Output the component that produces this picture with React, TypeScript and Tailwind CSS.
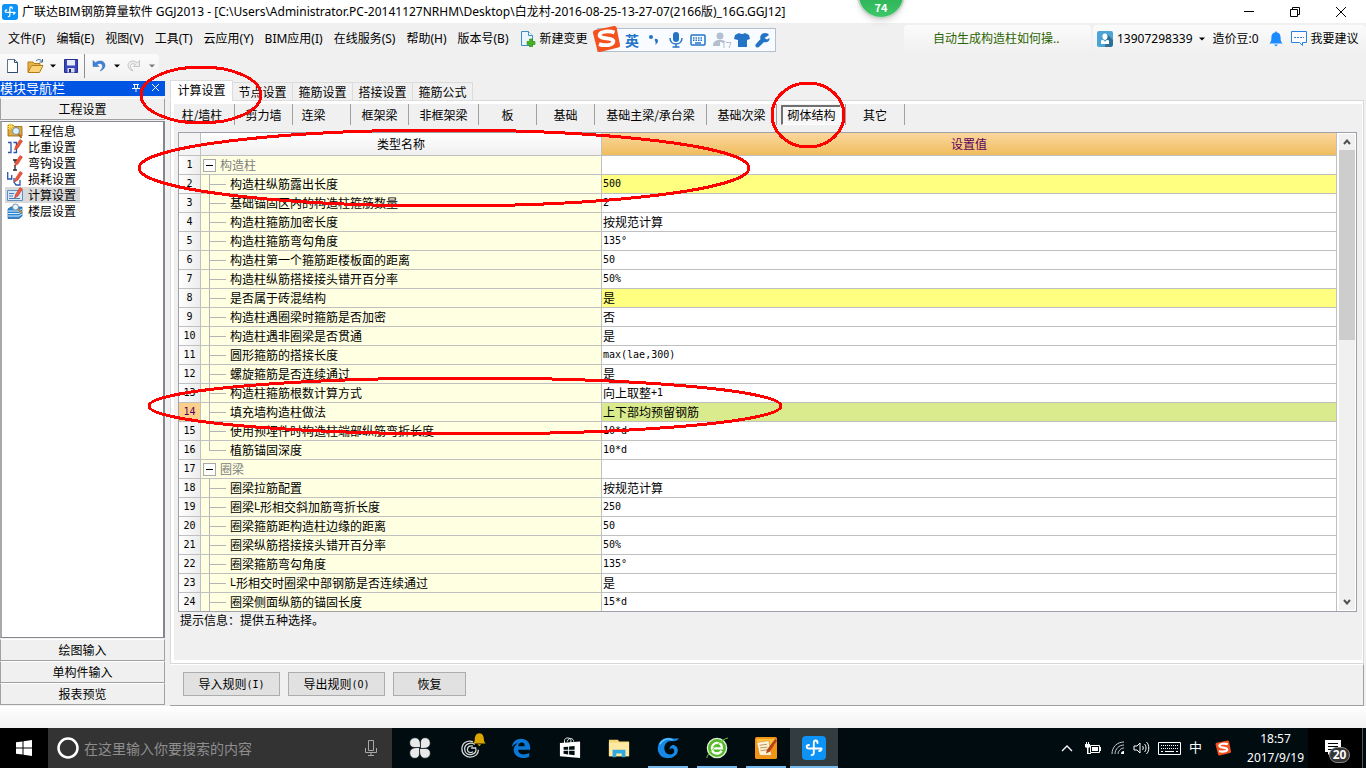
import { useState, type ReactNode } from "react";
import clsx from "clsx";

type Row = {
  label: string;
  value?: string;
  group?: boolean;
  last?: boolean;
  highlight?: boolean;
};

const menus = ["文件(F)", "编辑(E)", "视图(V)", "工具(T)", "云应用(Y)", "BIM应用(I)", "在线服务(S)", "帮助(H)", "版本号(B)"];

const mainTabs = ["计算设置", "节点设置", "箍筋设置", "搭接设置", "箍筋公式"];

const subTabs = [
  { name: "柱/墙柱", width: "w-[61px] pr-1" },
  { name: "剪力墙", width: "w-[58px]" },
  { name: "连梁", width: "w-[58px] pr-4" },
  { name: "框架梁", width: "w-[58px]" },
  { name: "非框架梁", width: "w-[70px]" },
  { name: "板", width: "w-[58px]" },
  { name: "基础", width: "w-[58px]" },
  { name: "基础主梁/承台梁", width: "w-[112px]" },
  { name: "基础次梁", width: "w-[70px]" },
  { name: "砌体结构", width: "w-[69px]" },
  { name: "其它", width: "w-[59px]" },
];

const rows: Row[] = [
  { label: "构造柱", group: true },
  { label: "构造柱纵筋露出长度", value: "500", highlight: true },
  { label: "基础锚固区内的构造柱箍筋数量", value: "2" },
  { label: "构造柱箍筋加密长度", value: "按规范计算" },
  { label: "构造柱箍筋弯勾角度", value: "135°" },
  { label: "构造柱第一个箍筋距楼板面的距离", value: "50" },
  { label: "构造柱纵筋搭接接头错开百分率", value: "50%" },
  { label: "是否属于砖混结构", value: "是", highlight: true },
  { label: "构造柱遇圈梁时箍筋是否加密", value: "否" },
  { label: "构造柱遇非圈梁是否贯通", value: "是" },
  { label: "圆形箍筋的搭接长度", value: "max(lae,300)" },
  { label: "螺旋箍筋是否连续通过", value: "是" },
  { label: "构造柱箍筋根数计算方式", value: "向上取整+1" },
  { label: "填充墙构造柱做法", value: "上下部均预留钢筋" },
  { label: "使用预埋件时构造柱端部纵筋弯折长度", value: "10*d" },
  { label: "植筋锚固深度", value: "10*d", last: true },
  { label: "圈梁", group: true },
  { label: "圈梁拉筋配置", value: "按规范计算" },
  { label: "圈梁L形相交斜加筋弯折长度", value: "250" },
  { label: "圈梁箍筋距构造柱边缘的距离", value: "50" },
  { label: "圈梁纵筋搭接接头错开百分率", value: "50%" },
  { label: "圈梁箍筋弯勾角度", value: "135°" },
  { label: "L形相交时圈梁中部钢筋是否连续通过", value: "是" },
  { label: "圈梁侧面纵筋的锚固长度", value: "15*d" },
];

const mono = "font-['DejaVu_Sans_Mono',monospace] text-[10px]";
const ui = "font-['Noto_Sans','Noto_Sans_CJK_SC',sans-serif]";

// CJK keeps 12px, runs of latin text and digits use the narrow 6px mono
function Mixed({ text }: { text: string }) {
  return (
    <span className="flex items-center justify-center">
      {text.split(/([\x20-\xff]+)/).filter(Boolean).map((part, i) => (
        <span key={i} className={clsx(/^[\x20-\xff]/.test(part) && mono)}>
          {part}
        </span>
      ))}
    </span>
  );
}

function BimLogo({ className }: { className?: string }) {
  return (
    <svg viewBox="0 0 24 24" className={className} aria-hidden="true">
      <rect width="24" height="24" rx="4" fill="#0d93f6" />
      <path
        d="M15.500 7c0-1.700-.8-2.500-1.900-2.500-1.300 0-1.800.9-1.800 2.200v9.800c0 1.700-.8 2.600-2.200 2.600M19.500 12.500H7c-1.500 0-2.300-.5-2.300-1.700S5.500 9 7 9M19.500 12.500c0 1.700-.8 2.500-2.300 2.500"
        fill="none"
        stroke="#fff"
        strokeWidth="1.900"
        strokeLinecap="round"
      />
    </svg>
  );
}

function SogouS({ className }: { className?: string }) {
  return (
    <svg viewBox="0 0 28 28" className={className} aria-hidden="true">
      <path d="M3 5 22 1q2-.4 2.600 1.600L28 20q.3 2-1.700 2.600L8 27q-2 .4-2.600-1.600L1 8q-.3-2.300 2-3z" fill="#f4511e" />
      <path d="M22.500 7.500C17 5.500 8 6 7.600 10.200c-.3 4.300 14 1.800 13.800 6.300-.2 4-9.400 4.500-14.400 2.600" fill="none" stroke="#fff" strokeWidth="3.800" />
    </svg>
  );
}

function Caret({ className = "text-black" }: { className?: string }) {
  return (
    <svg viewBox="0 0 6 4" className={clsx("h-1 w-[6px]", className)} aria-hidden="true">
      <path d="M0 .5h6L3 3.500z" fill="currentColor" />
    </svg>
  );
}

function TitleBar() {
  return (
    <header className={clsx("flex h-[23px] shrink-0 items-center bg-white pl-[2px] text-[12px]", ui)}>
      <BimLogo className="h-4 w-4" />
      <h1 className="ml-1 whitespace-nowrap">
        广联达BIM钢筋算量软件 GGJ2013 - [C:\Users\Administrator.PC-20141127NRHM\Desktop\白龙村-2016-08-25-13-27-07(2166版)_16G.GGJ12]
      </h1>
      <div className="ml-auto flex pr-[2px]">
        <button aria-label="最小化" className="flex h-[22px] w-[46px] items-center justify-center">
          <svg viewBox="0 0 12 12" className="h-3 w-3"><path d="M1 5.500h10" stroke="#000" /></svg>
        </button>
        <button aria-label="还原" className="flex h-[22px] w-[46px] items-center justify-center">
          <svg viewBox="0 0 12 12" className="h-3 w-3"><path d="M1.500 3.500h7v7h-7zM3.500 3.500v-2h7v7h-2" fill="none" stroke="#000" /></svg>
        </button>
        <button aria-label="关闭" className="flex h-[22px] w-[46px] items-center justify-center">
          <svg viewBox="0 0 12 12" className="h-3 w-3"><path d="m1 1 10 10M11 1 1 11" stroke="#000" /></svg>
        </button>
      </div>
    </header>
  );
}

function MenuBar() {
  return (
    <div className={clsx("flex h-[31px] shrink-0 items-center pl-2 text-[12px] whitespace-nowrap", ui)}>
      <nav className="flex gap-[11px]">
        {menus.map((m) => (
          <button key={m}>{m}</button>
        ))}
        <button className="flex items-center gap-1">
          <svg viewBox="0 0 16 16" className="h-4 w-4" aria-hidden="true">
            <path d="M1.500.5h7l4 4v10h-11z" fill="#eaf6ff" stroke="#3a8fc4" />
            <path d="M8.500.5v4h4" fill="#fff" stroke="#3a8fc4" />
            <path d="M9.500 8h3v2.500H15v3h-2.500V16h-3v-2.500H7v-3h2.500z" fill="#45b51d" stroke="#2b8a12" strokeWidth=".6" />
          </svg>
          新建变更
        </button>
      </nav>
      <div className="ml-auto flex gap-[2px]">
        <a href="#" className="flex h-7 w-[187px] items-center rounded-sm bg-linear-to-b from-[#fbfbfb] to-[#f0f0f0] pl-[29px] text-[#2b6500]">
          自动生成构造柱如何操..
        </a>
        <div className="flex h-7 w-[273px] items-center rounded-sm bg-linear-to-b from-[#fbfbfb] to-[#f0f0f0] pl-1">
          <button className="flex items-center">
            <svg viewBox="0 0 16 16" className="mr-1 h-4 w-4" aria-hidden="true">
              <rect width="16" height="16" rx="2" fill="#4ba3d6" />
              <path d="m10 3 6 6v5l-2 2H8z" fill="#2f6f98" />
              <path d="M8 2.500c1.800 0 2.600 1.200 2.600 2.800C10.600 7 9.600 9 8 9S5.400 7 5.400 5.300C5.400 3.700 6.200 2.500 8 2.500zM4 9.500l2-.7 2 2 2-2 2 .7V13H4z" fill="#fff" />
            </svg>
            13907298339
            <span className="ml-[6px]"><Caret /></span>
          </button>
          <span className="ml-2">造价豆:0</span>
          <button aria-label="通知" className="ml-[10px]">
            <svg viewBox="0 0 14 16" className="h-4 w-[14px]"><path d="M7 0 8 1.500c3 .6 3.600 3 3.600 5.500 0 2.500.6 4 1.900 5.500H.5C1.800 11 2.400 9.500 2.400 7c0-2.500.6-4.900 3.600-5.500zM5 13.500h4L7 15.500z" fill="#1c8bff" /></svg>
          </button>
          <button className="ml-2 flex items-center gap-1">
            <svg viewBox="0 0 16 16" className="h-4 w-4" aria-hidden="true">
              <path d="M.5.5h15v11h-4v3l-3-3h-8z" fill="#fff" stroke="#2483e2" />
              <path d="M3 6.500h10" stroke="#2483e2" strokeDasharray="2 1" />
            </svg>
            我要建议
          </button>
        </div>
      </div>
    </div>
  );
}

function ToolBar() {
  return (
    <div className="flex h-[27px] shrink-0 pb-[3px]">
      <div className="flex items-center rounded-r-sm bg-linear-to-b from-[#fbfbfb] to-[#f2f2f2] pl-[5px]">
        <button aria-label="新建" className="w-[22px]">
          <svg viewBox="0 0 16 16" className="h-4 w-4">
            <path d="M2.500 1.500h7l3 3v10h-10z" fill="#fff" stroke="#5b7395" />
            <path d="M9.500 1.500v3h3v10h-10" fill="none" stroke="#2f4a73" />
          </svg>
        </button>
        <button aria-label="打开" className="flex w-9 items-center gap-[6px]">
          <svg viewBox="0 0 17 16" className="h-4 w-[17px]">
            <path d="M1 14V4h5l1 1.500h6V8" fill="#e9b44c" stroke="#b57c12" />
            <path d="M1 14.500 4.500 7.500H16L12.500 14.500z" fill="#fbd277" stroke="#b57c12" />
            <path d="M9 3c2-2 4.500-2 6 .5M15.500 1v3h-3" fill="none" stroke="#35608f" />
          </svg>
          <Caret />
        </button>
        <button aria-label="保存" className="flex h-full w-[22px] items-center border-r border-[#8d8d8d]">
          <svg viewBox="0 0 16 16" className="h-4 w-4">
            <path d="M1.500 1.500h13v13h-13z" fill="#3a46bd" stroke="#27308e" />
            <path d="M4 2h8v5.500H4z" fill="#e6ecfa" />
            <path d="M4.500 10h7v4.500h-7z" fill="#d5dbf2" />
            <path d="M6 11h2v3.500H6z" fill="#1d2468" />
          </svg>
        </button>
        <button aria-label="撤销" className="ml-[7px] flex w-[35px] items-center gap-2">
          <svg viewBox="0 0 14 14" className="h-[14px] w-[14px]">
            <path d="M1 1.500v6h6L5 5.500c2.500-2 5.500-1 5.500 1.700 0 2-1 3.300-2.500 4.800 3-1 5-3 5-5.700C13 2 7.500.5 3.300 3.800z" fill="#3f83d9" stroke="#2a66b5" strokeWidth=".5" />
          </svg>
          <Caret />
        </button>
        <button aria-label="重做" className="flex w-8 items-center gap-2">
          <svg viewBox="0 0 14 14" className="h-[14px] w-[14px]">
            <path d="M12.500 1.500v6h-6l2-2C6 4 3.500 5 3.500 7.200c0 2 1 3.300 2.500 4.800-3-1-5-3-5-5.700C1 2 6.500.5 10.300 3.800z" fill="#eee" stroke="#b9b9b9" strokeWidth=".8" />
          </svg>
          <Caret className="text-[#777]" />
        </button>
      </div>
    </div>
  );
}

const pencil = <path d="m8.500 7.500 4.500-7L15.500 2 11 9l-3.500 2z" fill="#f0563a" stroke="#b33019" strokeWidth=".5" />;

const navItems: { name: string; icon: ReactNode }[] = [
  {
    name: "工程信息",
    icon: (
      <>
        <path d="M1 2h5l1 1.500h8V13H1z" fill="#e0a93c" stroke="#8f6410" strokeWidth=".8" />
        <path d="M3 0v7M0 3.500h7M1 1l5 5M6 1 1 6" stroke="#ffe14d" />
        <circle cx="9" cy="8" r="3.500" fill="#dff0ff" stroke="#6b8eae" />
        <path d="m11.500 11 3 4" stroke="#b5661c" strokeWidth="2" />
      </>
    ),
  },
  {
    name: "比重设置",
    icon: (
      <>
        <path d="M1 3.500h3v10H1M6.500 3.500h3v10h-3" fill="none" stroke="#2b56ac" strokeWidth="1.300" />
        {pencil}
      </>
    ),
  },
  {
    name: "弯钩设置",
    icon: (
      <>
        <path d="M6 5h4M8 5v3M8 10v5M6 15h4" stroke="#222" strokeWidth="1.300" />
        {pencil}
      </>
    ),
  },
  {
    name: "损耗设置",
    icon: (
      <>
        <path d="M.7 1v7h4V4M7 7v4l2 3h4V9" fill="none" stroke="#2b56ac" strokeWidth="1.300" />
        {pencil}
      </>
    ),
  },
  {
    name: "计算设置",
    icon: (
      <>
        <path d="M.5 3.500h15v10H.5z" fill="#d6e9fb" stroke="#5d8fc4" />
        <path d="M2 6.500h5M2 9h4M2 11.500h11" stroke="#4a7db8" />
        {pencil}
      </>
    ),
  },
  {
    name: "楼层设置",
    icon: (
      <>
        <path d="m1 6 3-2h11v9l-3 2.500H1z" fill="#2e86d0" stroke="#185a9a" strokeWidth=".7" />
        <path d="M1 8h11l3-2M1 10.500h11l3-2M1 13h11l3-2" fill="none" stroke="#d5ecff" />
        <circle cx="8.500" cy="4" r="3" fill="#e8f4ff" stroke="#7794ab" />
        <path d="m11 6 4 4" stroke="#c07a2b" strokeWidth="1.600" />
      </>
    ),
  },
];

function Sidebar() {
  const [active, setActive] = useState("计算设置");
  const bar = "flex h-[22px] shrink-0 items-center justify-center border-r border-b border-l border-[#a0a0a0] bg-[#f0f0f0]";
  return (
    <aside className="mb-px flex w-[165px] shrink-0 flex-col">
      <div className="flex h-[15px] shrink-0 items-center bg-[#0055e3] pb-px text-[13px] leading-[14px] text-white">
        模块导航栏
        <button aria-label="固定" className="mr-[10px] ml-auto">
          <svg viewBox="0 0 10 10" className="h-[10px] w-[10px]"><path d="M2 1.500h6M3.500 1.500v4M6.500 1.500v4M1 5.500h8M5 5.500V9" fill="none" stroke="#fff" /></svg>
        </button>
        <button aria-label="关闭导航栏" className="mr-1">
          <svg viewBox="0 0 10 10" className="h-[10px] w-[10px]"><path d="m1 1 7 7M8 1 1 8" stroke="#fff" /></svg>
        </button>
      </div>
      <button className={clsx(bar, "mt-[2px] border-t border-t-white")}>工程设置</button>
      <ul className="mt-px flex-1 border-2 border-t border-b border-[#828790] border-l-[#a8a8a8] bg-white py-px pl-[3px]">
        {navItems.map((item) => (
          <li key={item.name}>
            <button
              onClick={() => setActive(item.name)}
              className={clsx("flex h-4 items-center pr-1 leading-4", active === item.name && "bg-[#d9d9d9]")}
            >
              <svg viewBox="0 0 16 16" className="mx-[2px] h-4 w-4" aria-hidden="true">
                {item.icon}
              </svg>
              <span className="ml-[3px]">{item.name}</span>
            </button>
          </li>
        ))}
      </ul>
      <div className="mt-px">
        {["绘图输入", "单构件输入", "报表预览"].map((name) => (
          <button key={name} className={clsx(bar, "w-full border-t border-t-white")}>
            {name}
          </button>
        ))}
      </div>
    </aside>
  );
}

function SettingsTable() {
  const current = 13;
  return (
    <div className="flex min-h-0 flex-1 border border-[#a0a0a8] bg-white">
      <div className="min-w-0 flex-1 overflow-hidden">
        <table className="w-full table-fixed border-separate border-spacing-0 leading-[18px]">
          <colgroup>
            <col className="w-[22px]" />
            <col className="w-[401px]" />
            <col />
          </colgroup>
          <thead>
            <tr className="h-[23px]">
              <th className="border-r border-b border-[#c0c0c0] bg-[#f4f4f4] p-0" />
              <th className="border-r border-b border-[#c0c0c0] bg-linear-to-b from-white to-[#efefef] p-0 font-normal">类型名称</th>
              <th className="border-r border-b border-[#c0c0c0] bg-linear-to-b from-[#fbd79d] to-[#efbd5c] p-0 font-normal text-[#5c0060]">设置值</th>
            </tr>
          </thead>
          <tbody>
            {rows.map((row, i) => (
              <tr key={i} className="h-[19px]">
                <th
                  className={clsx(
                    "border-r border-b border-[#c0c0c0] p-0 font-normal",
                    mono,
                    i === current ? "bg-[#fdd08a] text-[#5c0060]" : "bg-linear-to-r from-white to-[#ececec]"
                  )}
                >
                  {i + 1}
                </th>
                <td className="border-r border-b border-[#c0c0c0] bg-[#ffffe1] p-0">
                  {row.group ? (
                    <div className="flex h-[18px] items-center gap-1 pl-[2px] text-[#808080]">
                      <button aria-label="折叠" className="flex h-[13px] w-[13px] items-center justify-center border border-[#a8a8a8] bg-white">
                        <span className="h-px w-[7px] bg-black" />
                      </button>
                      {row.label}
                    </div>
                  ) : (
                    <div className="flex h-[18px] pl-2 whitespace-nowrap">
                      <span className={clsx("w-px bg-[#b4b4b4]", row.last ? "h-[10px]" : "h-[18px]")} />
                      <span className="mr-1 h-[10px] w-4 border-b border-[#b4b4b4]" />
                      <Mixed text={row.label} />
                    </div>
                  )}
                </td>
                <td
                  className={clsx(
                    "border-r border-b border-[#c0c0c0] py-0 pr-0 pl-px",
                    row.highlight && "bg-[#ffff80]",
                    i === current && "bg-[#d9eb8d]"
                  )}
                >
                  <div className="flex h-[18px]">
                    <Mixed text={row.value ?? ""} />
                  </div>
                </td>
              </tr>
            ))}
          </tbody>
        </table>
      </div>
      <div className="my-px mr-px ml-[2px] flex w-4 flex-col bg-[#f0f0f0]">
        <button aria-label="向上滚动" className="flex h-4 items-center justify-center">
          <svg viewBox="0 0 8 6" className="h-[6px] w-2"><path d="m1 5 3-3.500L7 5" fill="none" stroke="#505050" strokeWidth="2" /></svg>
        </button>
        <div className="h-[190px] bg-[#cdcdcd]" />
        <button aria-label="向下滚动" className="mt-auto flex h-4 items-center justify-center">
          <svg viewBox="0 0 8 6" className="h-[6px] w-2"><path d="m1 1 3 3.500L7 1" fill="none" stroke="#505050" strokeWidth="2" /></svg>
        </button>
      </div>
    </div>
  );
}

function MainPanel() {
  const [tab, setTab] = useState("计算设置");
  const [sub, setSub] = useState("砌体结构");
  const pushButton = "flex h-6 items-center justify-center border border-[#adadad] bg-[#e1e1e1]";
  return (
    <main className="-mt-px mr-[2px] ml-[5px] flex min-w-0 flex-1 flex-col">
      <div className="relative -mb-px flex items-end">
        {mainTabs.map((name) => (
          <button
            key={name}
            onClick={() => setTab(name)}
            className={clsx(
              "border border-[#dcdcdc]",
              tab === name ? "h-[21px] w-[63px] border-b-white bg-white pb-[2px]" : "-ml-px h-[19px] w-[61px] first:ml-0"
            )}
          >
            {name}
          </button>
        ))}
      </div>
      <section className="flex min-h-0 flex-1 flex-col border border-[#d8d8d8] bg-white p-[3px] pr-px">
        <div className="flex min-h-0 flex-1 flex-col bg-[#f0f0f0] pr-[5px] pl-1">
          <div className="-ml-1 flex h-7 shrink-0 items-start">
            {subTabs.map((s) => (
              <div key={s.name} className={clsx("flex h-[21px] items-center justify-center border-r border-[#a0a0a0]", s.width)}>
                <button
                  onClick={() => setSub(s.name)}
                  className={clsx(
                    "h-5 whitespace-nowrap",
                    sub === s.name && "border-t-2 border-r border-b border-l-2 border-[#707070] border-r-white border-b-white bg-[#f8f8f8] px-1 leading-4"
                  )}
                >
                  {s.name}
                </button>
              </div>
            ))}
          </div>
          <SettingsTable />
          <p className="h-12 shrink-0 pl-[2px] leading-4">提示信息：提供五种选择。</p>
        </div>
      </section>
      <footer className="flex h-[42px] shrink-0 gap-2 border-t border-r border-b border-[#a0a0a0] border-t-white pt-[7px] pl-[13px]">
        <button className={clsx(pushButton, "w-[97px]")}><Mixed text="导入规则(I)" /></button>
        <button className={clsx(pushButton, "w-[97px]")}><Mixed text="导出规则(O)" /></button>
        <button className={clsx(pushButton, "w-[73px]")}>恢复</button>
      </footer>
    </main>
  );
}

const apps: { name: string; state?: string; icon: ReactNode }[] = [
  {
    name: "风扇",
    icon: (
      <g fill="#e8eaea" stroke="#000c10" strokeWidth=".8">
        <path d="M12.500 11.500H6C2.500 11.500.7 9.500.7 6.300S3 .8 6.500.8c4 0 6.500 3 6 10.700z" />
        <path d="M12.500 12.500V6C12.500 2.500 14.500.7 17.700.7s5.500 2.300 5.500 5.800c0 4-3 6.500-10.700 6z" />
        <path d="M11.500 12.500H18c3.500 0 5.300 2 5.300 5.200s-2.300 5.500-5.800 5.500c-4 0-6.500-3-6-10.700z" />
        <path d="M11.500 11.500V18c0 3.500-2 5.300-5.200 5.300S.8 21 .8 17.500c0-4 3-6.500 10.700-6z" />
      </g>
    ),
  },
  {
    name: "提醒",
    icon: (
      <>
        <path d="M13 5C6 3 1 7 1 13s5 9 9 9c6 0 9-4 9-8M15 8c-5-3-11 0-11 5s4 7 8 6 5-4 4-7h-5M13 10c-4-1-6 1-6 4s4 4 6 2" fill="none" stroke="#d6dada" strokeWidth="1.400" />
        <path d="M20-4c4 0 5 4 5 7 0 2 1 3 2 4H13c1-1 2-2 2-4 0-3 1-7 5-7zM18 8h4l-2 2z" fill="#dba500" />
      </>
    ),
  },
  {
    name: "Edge",
    icon: <path d="M2 11C3 5 7 2 12 2c6 0 10 4 10 10v2H9c0 4 3 5 6 5 2 0 4-.5 6-1.500v4c-2 1-4 1.500-7 1.500-6 0-10-4-10-9 0-3 2-6 5-7.500-3 .5-5 2-7 4.500zm7-1h7c0-3-1-4-3.300-4C10.500 6 9 8 9 10z" fill="#0a78d7" />,
  },
  {
    name: "应用商店",
    icon: (
      <>
        <path d="M1 6.500 23 5v18L1 21z" fill="#fff" />
        <path d="M6 7V4c0-4 7-4 7 0v3M9 5c1-5 7-4 7 0" fill="none" stroke="#fff" />
        <path d="m5 11 5-.5V14H5zM11 10.300l6-.5V14h-6zM5 15h5v4l-5-.6zM11 15h6v5l-6-.8z" fill="#000c10" />
      </>
    ),
  },
  {
    name: "资源管理器",
    icon: (
      <>
        <path d="M1 3h10l1 2h11v16H1z" fill="#f7d774" />
        <path d="M1 6h22v15H1z" fill="#ffe9a2" />
        <path d="M5 22v-8h14v8h-4v-4H9v4z" fill="#2fa8e0" />
      </>
    ),
  },
  {
    name: "浏览器",
    state: "bg-[#76b9ed]",
    icon: (
      <>
        <path d="M24 1c-2 3-4 3.500-7 3.500C11 4 8 8 8 12c0 5 3 7 6 7 4 0 6-3 4-6-1-1-3-1-4 1-1-3 2-6 5-5 5 2 5 9 0 12-2 1.500-4 2-6 2C5 24 0 18 1 11 2 4 8 0 14 1c4 1 7 1 10 0z" fill="#1688e8" />
        <path d="M3 8C6 2 12 1 17 3" fill="none" stroke="#65c8ff" strokeWidth="1.500" />
      </>
    ),
  },
  {
    name: "360浏览器",
    state: "bg-[#76b9ed]",
    icon: (
      <>
        <circle cx="12" cy="12" r="10.500" fill="#55b82c" stroke="#dff3d4" strokeWidth="1.500" />
        <path d="M17 15c-1 2-3 3-5 3-4 0-5.500-3-5.500-6S9 6.500 12 6.500s5.500 2 5.500 6H8" fill="none" stroke="#fff" strokeWidth="2.500" />
        <path d="M1 23C0 19 17 2 24 1" fill="none" stroke="#66d22f" />
      </>
    ),
  },
  {
    name: "记事",
    state: "bg-[#76b9ed]",
    icon: (
      <>
        <rect width="24" height="24" rx="2" fill="#f39413" />
        <path d="M2 2h20v7H2z" fill="#ffc23d" />
        <path d="m2 6 13-2 3 16H5z" fill="#fff3d6" stroke="#c98a2e" strokeWidth=".6" />
        <path d="m5 9 8-1M5.500 12l8-1M6 15l7-1" stroke="#b88a4d" />
        <path d="m22 2-9 12-1 4 4-2 8-12z" fill="#b5431b" />
      </>
    ),
  },
];

function TaskBar() {
  return (
    <footer className={clsx("flex h-10 shrink-0 bg-[#000c10] text-white", ui)}>
      <button aria-label="开始" className="flex w-12 items-center justify-center bg-black">
        <svg viewBox="0 0 16 16" className="h-4 w-4"><path d="M0 2.300 6.500 1.400v6.100H0zM7.500 1.200 16 0v7.500H7.500zM0 8.500h6.500v6.100L0 13.700zM7.500 8.500H16V16l-8.500-1.200z" fill="#fff" /></svg>
      </button>
      <label className="flex w-[344px] items-center bg-[#333] pl-2">
        <svg viewBox="0 0 24 24" className="h-6 w-6 shrink-0" aria-hidden="true"><circle cx="12" cy="12" r="9.500" fill="none" stroke="#fff" strokeWidth="2.500" /></svg>
        <input
          aria-label="搜索"
          placeholder="在这里输入你要搜索的内容"
          className="ml-1 min-w-0 flex-1 bg-transparent text-[14px] outline-none placeholder:text-[#8e8e8e]"
        />
        <svg viewBox="0 0 12 18" className="mr-[15px] h-[18px] w-3 shrink-0" aria-hidden="true">
          <path d="M3.500 1.500h5v10h-5zM.5 9v4.500h11V9M6 13.500v3M3 16.500h6" fill="none" stroke="#a8a8a8" />
        </svg>
      </label>
      <div className="flex">
        {apps.map((app, i) => (
          <button key={app.name} aria-label={app.name} className={clsx("flex flex-col items-center", i === 0 ? "w-[55px]" : "w-[49px]")}>
            <svg viewBox="0 0 24 24" className="mt-2 h-6 w-6 overflow-visible p-px">
              {app.icon}
            </svg>
            <span className={clsx("mt-auto h-[2px] w-10", app.state)} />
          </button>
        ))}
        <button aria-label="广联达BIM钢筋算量软件" className="flex w-12 flex-col items-center bg-[#333d40]">
          <BimLogo className="mt-2 h-6 w-6" />
          <span className="mt-auto h-[2px] w-full bg-[#76b9ed]" />
        </button>
      </div>
      <div className="ml-auto flex items-center">
        <svg viewBox="0 0 12 8" className="mr-3 h-2 w-3" aria-hidden="true"><path d="m1 7 5-5 5 5" fill="none" stroke="#fff" strokeWidth="1.300" /></svg>
        <svg viewBox="0 0 16 12" className="mr-[10px] h-3 w-4" aria-hidden="true">
          <path d="M5.500 3.500h9v7h-9z" fill="none" stroke="#fff" />
          <path d="M7 5h6v4H7zM15 5h1v4h-1zM1 0h1v2h1V0h1v2h1v3L3.500 6v5H6v1H2V6L0 5V2h1z" fill="#fff" />
        </svg>
        <svg viewBox="0 0 14 14" className="mr-2 h-[14px] w-[14px]" aria-hidden="true">
          <path d="M1 13C1 6 6 1 13 1M4 13c0-5 4-9 9-9M7 13c0-3 3-6 6-6" fill="none" stroke="#c9cccc" />
          <path d="M10 13c0-2 1-3 3-3v3z" fill="#fff" />
        </svg>
        <svg viewBox="0 0 17 14" className="mr-2 h-[14px] w-[17px]" aria-hidden="true">
          <path d="M1 5h3l3-3v10L4 9H1zM9.500 5c1 1 1 3 0 4M11.500 3c2 2 2 6 0 8M13.500 1c3 3 3 9 0 12" fill="none" stroke="#fff" />
        </svg>
        <svg viewBox="0 0 23 13" className="mr-2 h-[13px] w-[23px]" aria-hidden="true">
          <path d="M.5.5h22v12H.5z" fill="none" stroke="#fff" />
          <path d="M3 3.500h17M3 6.500h17" stroke="#fff" strokeDasharray="1 1" />
          <path d="M3 9.500h2M7 9.500h9M18 9.500h2" stroke="#fff" />
        </svg>
        <span className="mr-[13px] text-[13px]">中</span>
        <SogouS className="mr-4 h-4 w-4" />
        <div className="mr-1 text-center text-[12px] leading-[19px]">
          <div>18:57</div>
          <div>2017/9/19</div>
        </div>
      </div>
      <button aria-label="操作中心" className="relative mr-[3px] w-[55px] border-r border-[#555] bg-black">
        <svg viewBox="0 0 16 16" className="absolute top-3 left-[17px] h-4 w-4"><path d="M0 0h16v12H6l-3 3v-3H0z" fill="#fff" /><path d="M3 3.500h10M3 6.500h10M3 9.500h6" stroke="#000" /></svg>
        <span className="absolute top-[19px] left-[21px] flex h-4 w-[21px] items-center justify-center rounded-full border border-[#888] bg-[#333] text-[12px] font-bold">
          20
        </span>
      </button>
    </footer>
  );
}

// Floating input-method bar
function ImeBar() {
  return (
    <div className="absolute top-[28px] left-[597px] flex h-6 w-[179px] items-center border border-[#b4c0d0] bg-[#f8fbff] pl-[27px] text-[#2374c6]">
      <SogouS className="absolute -top-1 -left-[6px] h-7 w-7" />
      <span className="w-6 shrink-0 text-[14px] font-bold">英</span>
      <svg viewBox="0 0 126 16" className="h-4 w-[126px] shrink-0" aria-hidden="true">
        <g fill="#2374c6">
          <circle cx="2" cy="5" r="2" />
          <path d="M6 7c4-1 4 4 0 6 2-3-1-4 0-6z" />
          <rect x="24" y="0" width="6" height="10" rx="3" />
          <path d="M21 6c0 8 12 8 12 0M27 12v3M23.500 15h7" fill="none" stroke="#2374c6" strokeWidth="1.500" />
          <rect x="42" y="3" width="14" height="10" rx="1" fill="none" stroke="#2374c6" strokeWidth="1.500" />
          <path d="M44 6h10M44 8.200h10" stroke="#2374c6" strokeWidth="1.500" strokeDasharray="1.500 1" />
          <path d="M46 11h6" stroke="#2374c6" strokeWidth="1.500" />
          <path d="m86 3 4-2q3 2 6 0l4 2 1 4-3 1v7H89V8l-4-1z" />
          <path d="M120 3c-1-2-4-3-7-1-2 1.500-2 3.500-1.500 5L107 12c-2 2 1 4.500 3 3l5-5c3 1 6-1 5.500-4L118 7.500 115.500 6z" />
        </g>
        <g fill="#b3bfce">
          <circle cx="71" cy="4" r="3.500" />
          <path d="M64 14c0-5 3-6 7-6s5 1 6 2H71v4z" />
          <path d="M73 10.500h2V16M77 10.500h5L80 16" fill="none" stroke="#b3bfce" />
        </g>
      </svg>
    </div>
  );
}

function Annotations() {
  return (
    <svg
      className="pointer-events-none absolute top-0 left-0 h-[500px] w-[800px] overflow-visible"
      fill="none"
      stroke="#f00"
      strokeWidth="3"
      shapeRendering="crispEdges"
      aria-hidden="true"
    >
      <ellipse cx="201" cy="95" rx="60" ry="28" />
      <ellipse cx="808" cy="115" rx="36" ry="32" />
      <ellipse cx="444" cy="168" rx="305" ry="38" />
      <ellipse cx="465" cy="406" rx="316" ry="28" />
    </svg>
  );
}

export default function App() {
  return (
    <div className="relative flex h-screen flex-col overflow-hidden bg-[#f0f0f0] font-['Noto_Sans_CJK_SC',sans-serif] text-[12px] text-black">
      <TitleBar />
      <MenuBar />
      <ToolBar />
      <div className="flex min-h-0 flex-1">
        <Sidebar />
        <MainPanel />
      </div>
      <div className="h-[22px] shrink-0 bg-linear-to-b from-white to-[#f2f2f2]" />
      <TaskBar />
      <ImeBar />
      <div className="absolute -top-[29px] left-[857px] flex h-12 w-12 items-end justify-center rounded-full border-2 border-[#c8d6cc] bg-linear-to-b from-[#1f9a46] to-[#3cc868] pb-1 text-[11px] leading-none font-bold text-white shadow-md">
        74
      </div>
      <Annotations />
    </div>
  );
}
